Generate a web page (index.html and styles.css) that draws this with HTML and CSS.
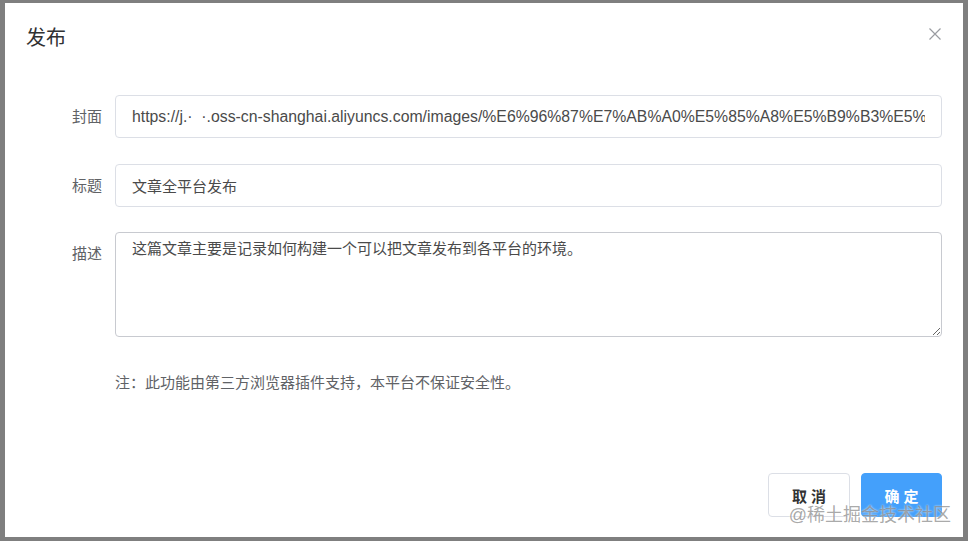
FILE: index.html
```html
<!DOCTYPE html>
<html lang="zh-CN">
<head>
<meta charset="utf-8">
<title>发布</title>
<link rel="stylesheet" href="styles.css">
</head>
<body>
<div class="dialog">
  <div class="dialog-header">
    <span class="dialog-title">发布</span>
    <button class="dialog-close" type="button" aria-label="关闭">
      <svg width="12" height="12" viewBox="0 0 12 12"><path d="M0.5 0.5 L11.5 11.5 M11.5 0.5 L0.5 11.5" stroke="#9a9ca1" stroke-width="1.2" fill="none"/></svg>
    </button>
  </div>
  <div class="dialog-body">
    <form class="form">
      <div class="form-item">
        <label class="form-label">封面</label>
        <div class="form-control">
          <input class="input input-url" type="text" value="https://j.·  ·.oss-cn-shanghai.aliyuncs.com/images/%E6%96%87%E7%AB%A0%E5%85%A8%E5%B9%B3%E5%8F%B0%E5%8F%91%E5%B8%83.png">
        </div>
      </div>
      <div class="form-item">
        <label class="form-label">标题</label>
        <div class="form-control">
          <input class="input" type="text" value="文章全平台发布">
        </div>
      </div>
      <div class="form-item">
        <label class="form-label">描述</label>
        <div class="form-control">
          <textarea class="textarea">这篇文章主要是记录如何构建一个可以把文章发布到各平台的环境。</textarea>
        </div>
      </div>
      <p class="note">注：此功能由第三方浏览器插件支持，本平台不保证安全性。</p>
    </form>
  </div>
  <div class="dialog-footer">
    <button class="btn" type="button">取 消</button>
    <button class="btn btn-primary" type="button">确 定</button>
  </div>
</div>
<div class="watermark">@稀土掘金技术社区</div>
</body>
</html>
```

FILE: styles.css
```css
html, body {
  margin: 0;
  padding: 0;
}

body {
  width: 968px;
  height: 541px;
  overflow: hidden;
  background: #7f7f7f;
  font-family: "Liberation Sans", "Noto Sans CJK SC", sans-serif;
  font-size: 15px;
  color: #606266;
  position: relative;
  padding-top: 3px;
  box-sizing: border-box;
}

.dialog {
  margin-left: 5px;
  width: 958px;
  height: 534px;
  background: #fff;
  display: flex;
  flex-direction: column;
  box-sizing: border-box;
}

.dialog-header {
  padding: 22px 21px 10px 21px;
  display: flex;
  align-items: center;
  justify-content: space-between;
}

.dialog-title {
  font-size: 20px;
  line-height: 26px;
  color: #303133;
}

.dialog-close {
  border: 0;
  background: none;
  padding: 0;
  width: 12px;
  height: 12px;
  margin-right: 1px;
  margin-top: -8px;
  display: flex;
  cursor: pointer;
}

.dialog-body {
  flex: 1;
  padding: 34px 21px 0 21px;
}

.form {
  margin: 0;
}

.form-item {
  display: flex;
  margin-bottom: 25.5px;
}

.form-label {
  width: 89px;
  flex: none;
  box-sizing: border-box;
  padding-right: 13px;
  text-align: right;
  line-height: 43px;
  color: #606266;
}

.form-control {
  flex: 1;
}

.input {
  display: block;
  width: 100%;
  height: 43px;
  box-sizing: border-box;
  border: 1px solid #dcdfe6;
  border-radius: 4px;
  padding: 0 16px;
  font-family: inherit;
  font-size: 15px;
  color: #4a4a4a;
  background: #fff;
  outline: none;
}

.input-url {
  font-size: 15.8px;
}

.textarea {
  display: block;
  width: 100%;
  height: 105px;
  box-sizing: border-box;
  border: 1px solid #c8cad0;
  border-radius: 4px;
  padding: 5px 16px;
  line-height: 1.5;
  font-family: inherit;
  font-size: 15px;
  color: #4a4a4a;
  resize: vertical;
  outline: none;
}

.note {
  margin: 35px 0 0 89px;
  line-height: 21px;
  color: #606266;
}

.dialog-footer {
  display: flex;
  justify-content: flex-end;
  gap: 11px;
  padding: 0 21px 20px;
}

.btn {
  width: 82px;
  height: 44px;
  box-sizing: border-box;
  border: 1px solid #dcdfe6;
  border-radius: 4px;
  background: #fff;
  color: #333;
  font-family: inherit;
  font-size: 15px;
  font-weight: bold;
  cursor: pointer;
}

.btn-primary {
  width: 81px;
  background: #44a0fb;
  border-color: #44a0fb;
  color: #fff;
}

.watermark {
  position: absolute;
  right: 17px;
  bottom: 15px;
  font-size: 18px;
  line-height: 22px;
  color: rgba(120, 120, 120, 0.65);
  text-shadow: 0 0 2px rgba(255, 255, 255, 0.9);
  pointer-events: none;
}
```
